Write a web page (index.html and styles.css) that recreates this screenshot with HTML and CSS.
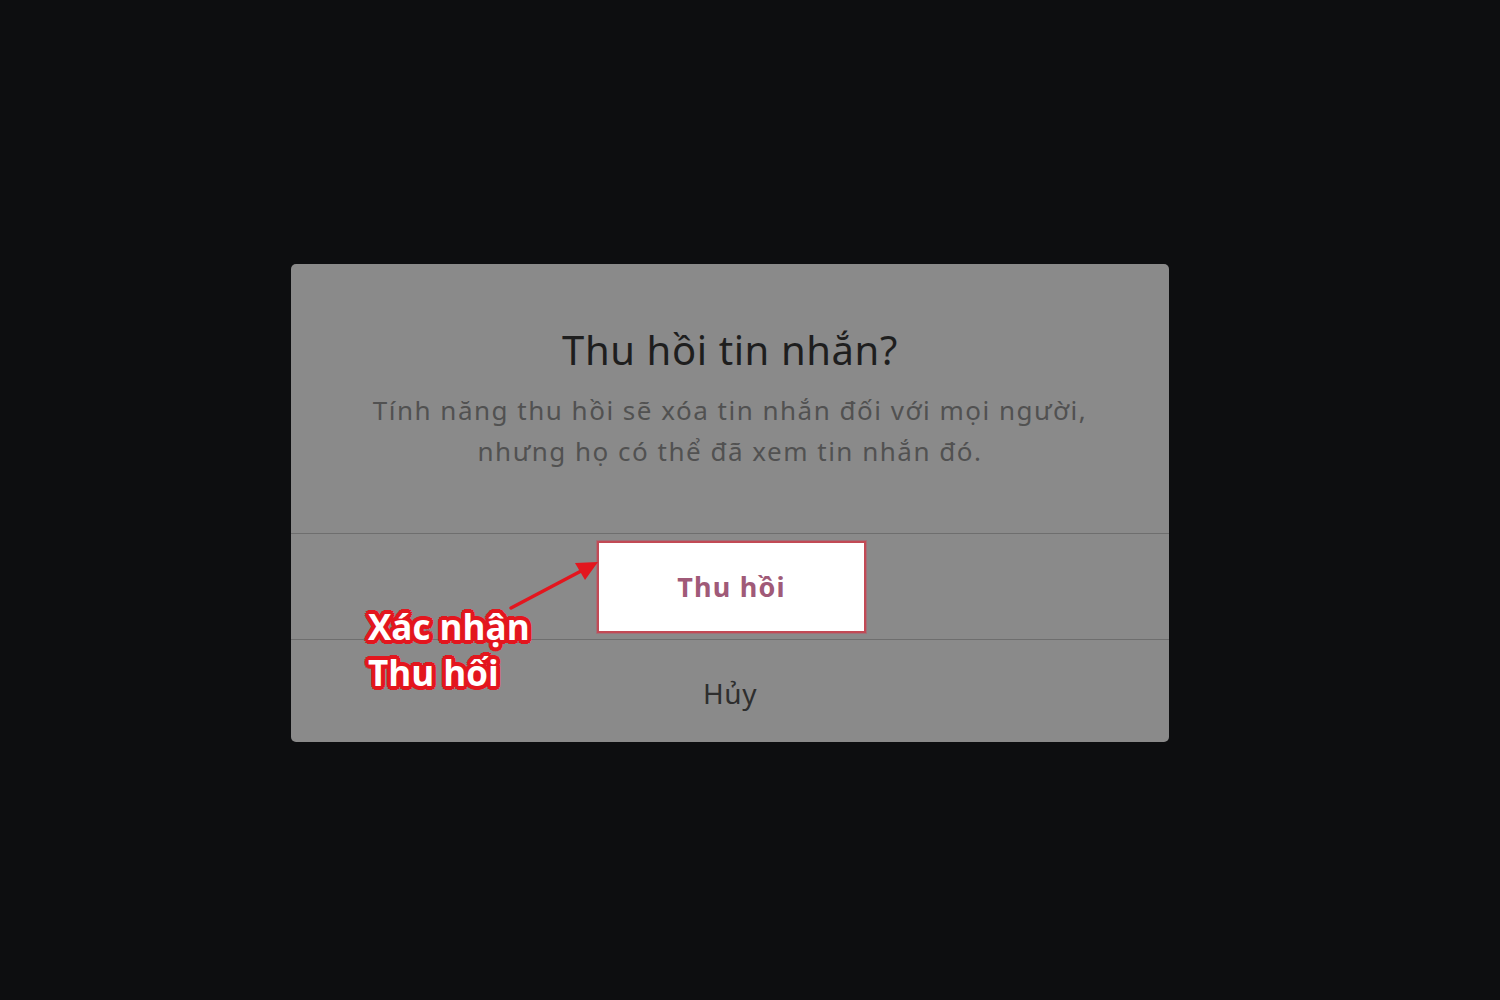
FILE: index.html
```html
<!DOCTYPE html>
<html lang="vi">
<head>
<meta charset="utf-8">
<link rel="stylesheet" href="styles.css">
</head>
<body>
<div class="stage">
  <div class="dialog">
    <div class="head">
      <div class="title">Thu hồi tin nhắn?</div>
      <div class="desc">Tính năng thu hồi sẽ xóa tin nhắn đối với mọi người,<br>nhưng họ có thể đã xem tin nhắn đó.</div>
    </div>
    <div class="row row-confirm">
      <div class="btn-confirm">Thu hồi</div>
    </div>
    <div class="row row-cancel">Hủy</div>
    <svg class="arrow" width="100" height="60" viewBox="0 0 100 60">
      <line x1="8" y1="52" x2="80" y2="14" stroke="#e3161e" stroke-width="3.5" stroke-linecap="round"/>
      <polygon points="95,6 72,7 82,24" fill="#e3161e"/>
    </svg>
    <div class="note">Xác nhận<br>Thu hối</div>
  </div>
</div>
</body>
</html>
```

FILE: styles.css
```css
html, body {
  margin: 0;
  padding: 0;
  background: #0d0e10;
}
.stage {
  width: 1500px;
  height: 1000px;
  box-sizing: border-box;
  padding: 264px 0 0 291px;
}
.dialog {
  position: relative;
  width: 878px;
  height: 478px;
  background: #8a8a8a;
  border-radius: 5px;
  font-family: "Noto Sans", "Open Sans", sans-serif;
  display: flex;
  flex-direction: column;
}
.head {
  height: 270px;
  box-sizing: border-box;
  padding-top: 60px;
  text-align: center;
  border-bottom: 1.5px solid #6e6e6e;
}
.title {
  font-size: 40px;
  line-height: 52px;
  letter-spacing: 0.6px;
  color: #1e1e1e;
}
.desc {
  margin-top: 14px;
  font-size: 26px;
  line-height: 41px;
  letter-spacing: 1.5px;
  color: #515151;
}
.row {
  display: flex;
  align-items: center;
  justify-content: center;
}
.row-confirm {
  height: 105px;
  border-bottom: 1.5px solid #6e6e6e;
}
.btn-confirm {
  width: 265px;
  height: 88px;
  margin-left: 3px;
  background: #fff;
  border: 2px solid #c24a55;
  display: flex;
  align-items: center;
  justify-content: center;
  font-size: 27px;
  font-weight: 700;
  letter-spacing: 1.2px;
  color: #a05a78;
  box-shadow: 0 0 0 1px #a07078;
}
.row-cancel {
  flex: 1;
  font-size: 28px;
  letter-spacing: 0.5px;
  color: #2e2e2e;
  padding-top: 4px;
}
.arrow {
  position: absolute;
  left: 212px;
  top: 292px;
}
.note {
  position: absolute;
  left: 77px;
  top: 340px;
  font-family: "Open Sans", "Noto Sans", sans-serif;
  font-weight: 700;
  font-size: 35px;
  line-height: 46px;
  letter-spacing: 0;
  color: #fff;
  text-shadow:
    3px 0 0 #e3161e, -3px 0 0 #e3161e, 0 3px 0 #e3161e, 0 -3px 0 #e3161e,
    2px 2px 0 #e3161e, -2px 2px 0 #e3161e, 2px -2px 0 #e3161e, -2px -2px 0 #e3161e,
    4px 1px 0 #e3161e, -4px 1px 0 #e3161e, 1px 4px 0 #e3161e, 1px -4px 0 #e3161e,
    4px -1px 0 #e3161e, -4px -1px 0 #e3161e, -1px 4px 0 #e3161e, -1px -4px 0 #e3161e,
    3px 3px 0 #e3161e, -3px 3px 0 #e3161e, 3px -3px 0 #e3161e, -3px -3px 0 #e3161e;
}
```
